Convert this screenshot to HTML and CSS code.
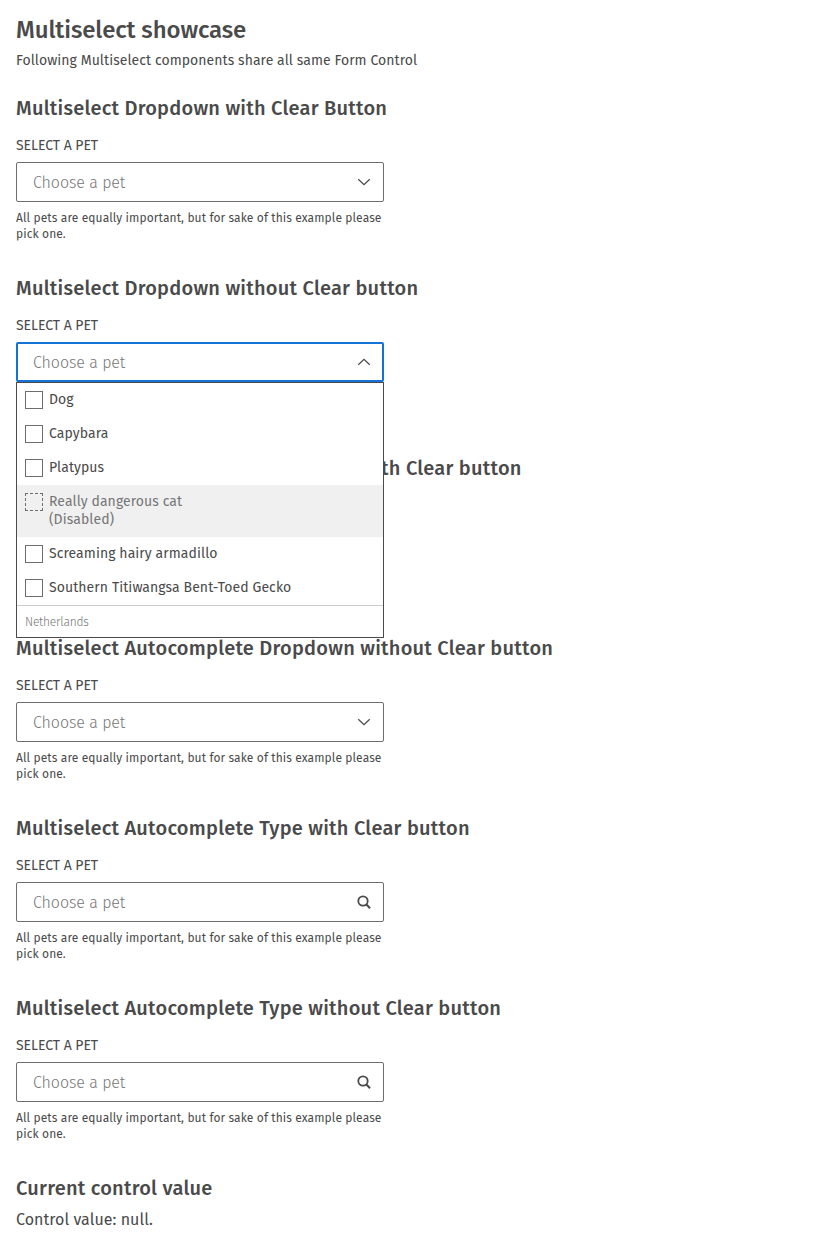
FILE: index.html
```html
<!DOCTYPE html>
<html lang="en">
<head>
<meta charset="utf-8">
<title>Multiselect showcase</title>
<link rel="stylesheet" href="styles.css">
</head>
<body>
<svg class="sprite" aria-hidden="true">
  <symbol id="chevron-down" viewBox="0 0 16 16"><path d="M2.3 5.3 8 10.7l5.7-5.4" fill="none" stroke="currentColor" stroke-width="1.25"/></symbol>
  <symbol id="chevron-up" viewBox="0 0 16 16"><path d="M2.3 10.7 8 5.3l5.7 5.4" fill="none" stroke="currentColor" stroke-width="1.25"/></symbol>
  <symbol id="search" viewBox="0 0 16 16"><g fill="none" stroke="currentColor"><circle cx="7" cy="7" r="4.7" stroke-width="1.8"/><path d="m10.2 10.2 3.8 4" stroke-width="2"/></g></symbol>
</svg>
<main class="page">
  <header class="intro">
    <h1 class="title">Multiselect showcase</h1>
    <p class="subtitle">Following Multiselect components share all same Form Control</p>
  </header>

  <section class="example">
    <h2 class="heading">Multiselect Dropdown with Clear Button</h2>
    <div class="field">
      <label class="label">SELECT A PET</label>
      <div class="control"><span class="placeholder">Choose a pet</span><svg class="icon"><use href="#chevron-down"/></svg></div>
      <p class="hint">All pets are equally important, but for sake of this example please<br>pick one.</p>
    </div>
  </section>

  <section class="example">
    <h2 class="heading">Multiselect Dropdown without Clear button</h2>
    <div class="field">
      <label class="label">SELECT A PET</label>
      <div class="control control-open"><span class="placeholder">Choose a pet</span><svg class="icon"><use href="#chevron-up"/></svg>
        <div class="menu">
          <div class="option"><span class="checkbox"></span><span class="option-text">Dog</span></div>
          <div class="option"><span class="checkbox"></span><span class="option-text">Capybara</span></div>
          <div class="option"><span class="checkbox"></span><span class="option-text">Platypus</span></div>
          <div class="option option-disabled"><span class="checkbox checkbox-disabled"></span><span class="option-text">Really dangerous cat<br>(Disabled)</span></div>
          <div class="option"><span class="checkbox"></span><span class="option-text">Screaming hairy armadillo</span></div>
          <div class="option"><span class="checkbox"></span><span class="option-text">Southern Titiwangsa Bent-Toed Gecko</span></div>
          <div class="group">Netherlands</div>
        </div>
      </div>
      <p class="hint">All pets are equally important, but for sake of this example please<br>pick one.</p>
    </div>
  </section>

  <section class="example">
    <h2 class="heading">Multiselect Autocomplete Dropdown with Clear button</h2>
    <div class="field">
      <label class="label">SELECT A PET</label>
      <div class="control"><span class="placeholder">Choose a pet</span><svg class="icon"><use href="#chevron-down"/></svg></div>
      <p class="hint">All pets are equally important, but for sake of this example please<br>pick one.</p>
    </div>
  </section>

  <section class="example">
    <h2 class="heading">Multiselect Autocomplete Dropdown without Clear button</h2>
    <div class="field">
      <label class="label">SELECT A PET</label>
      <div class="control"><span class="placeholder">Choose a pet</span><svg class="icon"><use href="#chevron-down"/></svg></div>
      <p class="hint">All pets are equally important, but for sake of this example please<br>pick one.</p>
    </div>
  </section>

  <section class="example">
    <h2 class="heading">Multiselect Autocomplete Type with Clear button</h2>
    <div class="field">
      <label class="label">SELECT A PET</label>
      <div class="control"><span class="placeholder">Choose a pet</span><svg class="icon"><use href="#search"/></svg></div>
      <p class="hint">All pets are equally important, but for sake of this example please<br>pick one.</p>
    </div>
  </section>

  <section class="example">
    <h2 class="heading">Multiselect Autocomplete Type without Clear button</h2>
    <div class="field">
      <label class="label">SELECT A PET</label>
      <div class="control"><span class="placeholder">Choose a pet</span><svg class="icon"><use href="#search"/></svg></div>
      <p class="hint">All pets are equally important, but for sake of this example please<br>pick one.</p>
    </div>
  </section>

  <section class="result">
    <h2 class="heading">Current control value</h2>
    <p class="value">Control value: null.</p>
  </section>
</main>
</body>
</html>
```
FILE: styles.css
```css
* { box-sizing: border-box; }
body {
  margin: 0;
  background: #fff;
  color: #4a4a4a;
  font-family: "Fira Sans", "Noto Sans", sans-serif;
}
h1, h2, p { margin: 0; white-space: nowrap; }
.sprite { display: none; }
.page { height: 1246px; padding: 14px 16px 0; overflow: hidden; }
.intro { height: 82px; }
.title { font-size: 24px; line-height: 32px; font-weight: 500; letter-spacing: -0.11px; }
.subtitle { margin-top: 6px; font-size: 14px; line-height: 18px; letter-spacing: 0.065px; }
.example { height: 180px; }
.heading { font-size: 20px; line-height: 24px; font-weight: 500; letter-spacing: 0.24px; }
.field { width: 368px; margin-top: 17px; }
.label { display: block; margin-bottom: 7px; font-size: 14px; line-height: 18px; letter-spacing: -0.05px; }
.control {
  position: relative;
  display: flex;
  align-items: center;
  justify-content: space-between;
  height: 40px;
  padding: 0 11px 0 16px;
  border: 1px solid #6e6e6e;
  border-radius: 2px;
}
.control-open { border: 2px solid #1473d6; padding: 0 10px 0 15px; }
.placeholder { padding-top: 2px; color: #767676; font-size: 16px; font-weight: 300; line-height: 24px; letter-spacing: -0.07px; }
.icon { width: 16px; height: 16px; color: #4a4a4a; }
.hint { margin-top: 8px; font-size: 12px; line-height: 16px; letter-spacing: 0.1px; }
.menu {
  position: absolute;
  z-index: 1;
  top: 38px;
  left: -2px;
  width: 368px;
  border: 1px solid #4a4a4a;
  background: #fff;
}
.option { display: flex; gap: 6px; padding: 8px; font-size: 14px; line-height: 18px; letter-spacing: 0.08px; }
.option-text { white-space: nowrap; }
.option-disabled { color: #767676; background: #f0f0f0; }
.checkbox { width: 18px; height: 18px; border: 1px solid #6e6e6e; }
.checkbox-disabled { border-style: dashed; }
.group { height: 32px; padding: 8px; border-top: 1px solid #ccc; color: #767676; font-size: 12px; font-weight: 300; line-height: 16px; letter-spacing: -0.2px; }
.value { margin-top: 8px; font-size: 16px; line-height: 24px; letter-spacing: 0.04px; }
```
